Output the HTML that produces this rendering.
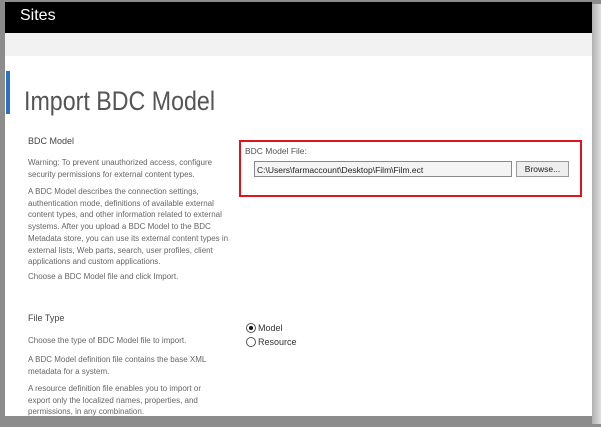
<!DOCTYPE html><html><head><style>
body{margin:0;width:601px;height:427px;background:#8c8c8c;position:relative;overflow:hidden;font-family:"Liberation Sans",sans-serif;}
#frame{position:absolute;left:5px;top:2px;width:587px;height:414px;background:#fff;overflow:hidden;}
#shadowR{position:absolute;left:592px;top:4px;width:9px;height:420px;background:linear-gradient(90deg,#b0b0b0,#e0e0e0);}
#bar{position:absolute;left:0;top:0;width:587px;height:31px;background:#000;color:#fff;font-size:16px;line-height:28px;padding-left:15px;box-sizing:border-box;}
#band{position:absolute;left:0;top:31px;width:587px;height:23px;background:#f2f2f2;}
#blue{position:absolute;left:1px;top:69px;width:4px;height:43px;background:#2a72c8;}
h1{position:absolute;left:19px;top:84px;margin:0;font-weight:normal;font-size:27px;color:#555;transform:scaleX(0.86);transform-origin:0 0;white-space:nowrap;}
.t{position:absolute;font-size:8px;line-height:11.7px;color:#666;}
.h{position:absolute;font-size:9px;color:#444;}
#red{position:absolute;left:234px;top:138px;width:339px;height:53px;border:2px solid #e0141e;}
#inp{position:absolute;left:249px;top:159px;width:258px;height:16px;border:1px solid #888;background:#f4f4f4;font-size:8.5px;line-height:16px;color:#222;padding-left:2px;box-sizing:border-box;}
#btn{position:absolute;left:511px;top:159px;width:53px;height:16px;border:1px solid #999;background:#eee;font-size:8.5px;line-height:14px;text-align:center;color:#222;box-sizing:border-box;}
.r{position:absolute;font-size:9px;color:#333;}
.c{display:inline-block;width:8px;height:8px;border:1px solid #555;border-radius:50%;vertical-align:-2px;margin-right:2px;position:relative;}
</style></head><body>
<div id="shadowR"></div>
<div id="frame">
<div id="bar">Sites</div>
<div id="band"></div>
<div id="blue"></div>
<h1>Import BDC Model</h1>
<div class="h" style="left:23px;top:134px">BDC Model</div>
<div class="t" style="left:23px;top:155px;width:212px">Warning: To prevent unauthorized access, configure security permissions for external content types.</div>
<div class="t" style="left:23px;top:184px;width:205px">A BDC Model describes the connection settings, authentication mode, definitions of available external content types, and other information related to external systems. After you upload a BDC Model to the BDC Metadata store, you can use its external content types in external lists, Web parts, search, user profiles, client applications and custom applications.</div>
<div class="t" style="left:23px;top:269px">Choose a BDC Model file and click Import.</div>
<div class="h" style="left:23px;top:311px">File Type</div>
<div class="t" style="left:23px;top:333px">Choose the type of BDC Model file to import.</div>
<div class="t" style="left:23px;top:352px;width:190px">A BDC Model definition file contains the base XML metadata for a system.</div>
<div class="t" style="left:23px;top:381px;width:190px">A resource definition file enables you to import or export only the localized names, properties, and permissions, in any combination.</div>
<div id="red"></div>
<div class="t" style="left:240px;top:144px;color:#555;font-size:8.5px">BDC Model File:</div>
<div id="inp">C:\Users\farmaccount\Desktop\Film\Film.ect</div>
<div id="btn">Browse...</div>
<div class="r" style="left:241px;top:321px"><span class="c"><span style="position:absolute;left:2px;top:2px;width:4px;height:4px;border-radius:50%;background:#111"></span></span>Model</div>
<div class="r" style="left:241px;top:335px"><span class="c"></span>Resource</div>
</div>
</body></html>
